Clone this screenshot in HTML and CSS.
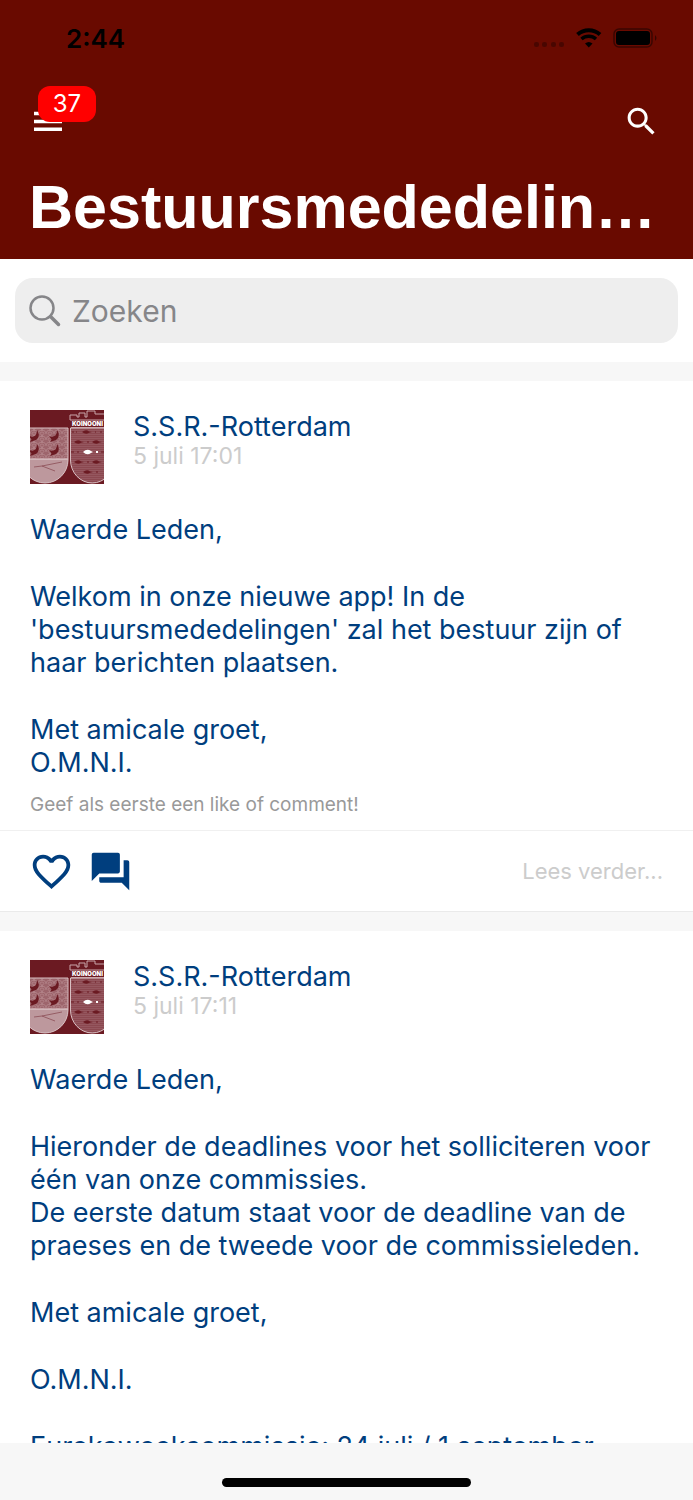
FILE: index.html
```html
<!DOCTYPE html>
<html lang="nl">
<head>
  <title>Bestuursmededelingen</title>
  <meta charset="utf-8">
  <meta name="viewport" content="width=device-width, initial-scale=1">
  <link rel="stylesheet" href="styles.css">
</head>
<body>
  <svg class="sprite" aria-hidden="true">
    <defs>
      <pattern id="waves" width="8" height="6" patternUnits="userSpaceOnUse">
        <path d="M0 6a4 4 0 0 1 8 0M2 6a2 2 0 0 1 4 0M-4 3a4 4 0 0 1 8 0M4 3a4 4 0 0 1 8 0" fill="none" stroke="#b98d92" stroke-width=".6"/>
      </pattern>
      <pattern id="stripes" width="4" height="2" patternUnits="userSpaceOnUse">
        <path d="M0 .5h4" stroke="#9c626a" stroke-width=".6"/>
      </pattern>
      <path id="bird" d="M8 0q3 4 1 8-2 3-5 3l-3 1 1.500-2.500L0 6q4 1.500 6.500-.5Q8 3.500 8 0z"/>
      <path id="fish" d="M0 0q4-3 7-.5l3 .5-3 .7Q4 3 0 0z"/>
    </defs>
    <symbol id="crest" viewBox="0 0 74 74">
      <rect width="74" height="74" fill="#6b1a22"/>
      <path d="M-8 18H38V50A23 23 0 0 1-8 50z" fill="#9d656c"/>
      <path d="M-8 18H38V49H-8z" fill="url(#waves)"/>
      <path d="M-8 49H38V50A23 23 0 0 1-8 50z" fill="#bd989d"/>
      <path d="M12 56l20-4M12 56l13 5M4 57l8-1" fill="none" stroke="#85444c" stroke-width=".7"/>
      <path d="M-8 49H38" stroke="#e5d3d5"/>
      <path d="M-8 18H38V50A23 23 0 0 1-8 50z" fill="none" stroke="#d8bfc2"/>
      <g fill="#6b1a22">
        <use href="#bird" x="-1" y="20"/>
        <use href="#bird" x="19" y="20"/>
        <use href="#bird" x="-1" y="34"/>
        <use href="#bird" x="19" y="34"/>
      </g>
      <path d="M40.500 18H84V50A21.750 23 0 0 1 40.500 50z" fill="#8b4850"/>
      <path d="M40.500 18H84V50A21.750 23 0 0 1 40.500 50z" fill="url(#stripes)" stroke="#d8bfc2"/>
      <g fill="#6b1a22">
        <use href="#fish" x="52" y="22"/>
        <use href="#fish" x="44" y="32"/>
        <use href="#fish" x="62" y="32"/>
        <use href="#fish" x="44" y="52"/>
        <use href="#fish" x="62" y="52"/>
        <use href="#fish" x="53" y="62"/>
      </g>
      <path d="M42 22h2M46 22h1M65 22h1M70 22h2M57 32h2M57 52h2M41 42h3M47 42h2M71 42h3M66 62h2" stroke="#6b1a22"/>
      <path d="M53 42q4-4 8-1l2 1-2 1q-4 3-8-1zM66 41h2v2h-2z" fill="#fff"/>
      <path d="M40 10V5H47V7H49V3H55V7H57V1H65V4H74M40 10H74M41 17.500H74" fill="none" stroke="#c9a5a9"/>
      <text x="42" y="16" class="crest-text">KOINOONI</text>
    </symbol>
    <symbol id="heart" viewBox="0 0 24 24">
      <path d="M16.500 3c-1.740 0-3.410.81-4.500 2.090C10.910 3.810 9.240 3 7.500 3 4.420 3 2 5.420 2 8.500c0 3.780 3.400 6.860 8.550 11.540L12 21.350l1.450-1.320C18.600 15.360 22 12.280 22 8.500 22 5.420 19.580 3 16.500 3zm-4.400 15.550l-.1.100-.1-.1C7.140 14.240 4 11.390 4 8.500 4 6.500 5.500 5 7.500 5c1.540 0 3.040.99 3.570 2.360h1.870C13.460 5.990 14.960 5 16.500 5c2 0 3.500 1.500 3.500 3.500 0 2.890-3.140 5.740-7.900 10.050z"/>
    </symbol>
    <symbol id="forum" viewBox="0 0 24 24">
      <path d="M21 6h-2v9H6v2c0 .55.45 1 1 1h11l4 4V7c0-.55-.45-1-1-1zm-4 6V3c0-.55-.45-1-1-1H3c-.55 0-1 .45-1 1v14l4-4h10c.55 0 1-.45 1-1z"/>
    </symbol>
  </svg>

  <header class="header">
    <div class="status">
      <span class="time">2:44</span>
      <svg class="status-icons" viewBox="0 0 124 24" aria-hidden="true">
        <g fill="#000" fill-opacity=".3">
          <rect x="1" y="16" width="5" height="5" rx="2"/>
          <rect x="9" y="16" width="5" height="5" rx="2"/>
          <rect x="18" y="16" width="5" height="5" rx="2"/>
          <rect x="26" y="16" width="5" height="5" rx="2"/>
        </g>
        <path d="M44.500 8.500a17 17 0 0 1 22.500 0" fill="none" stroke="#000" stroke-width="4"/>
        <path d="M48.500 13a11 11 0 0 1 14.500 0" fill="none" stroke="#000" stroke-width="3.500"/>
        <path d="M52 17.500a6 6 0 0 1 7.500 0L55.750 21.500z"/>
        <rect x="81" y="3" width="38" height="18" rx="5" fill="none" stroke="#000" stroke-opacity=".45" stroke-width="1.500"/>
        <rect x="83" y="5" width="34" height="14" rx="3"/>
        <path d="M122 9q3 3 0 6z" fill-opacity=".5"/>
      </svg>
    </div>
    <nav class="toolbar">
      <button class="icon-button menu" type="button" aria-label="Menu">
        <svg width="28" height="20" viewBox="0 0 28 20"><path d="M0 2.500h28M0 10.500h28M0 18.200h28" stroke="#fff" stroke-width="3.500"/></svg>
        <span class="badge">37</span>
      </button>
      <button class="icon-button" type="button" aria-label="Zoeken">
        <svg width="37" height="37" viewBox="0 0 24 24" fill="#fff"><path d="M15.500 14h-.79l-.28-.27C15.410 12.590 16 11.110 16 9.500 16 5.910 13.090 3 9.500 3S3 5.910 3 9.500 5.910 16 9.500 16c1.610 0 3.090-.59 4.230-1.570l.27.28v.79l5 4.990L20.490 19l-4.990-5zm-6 0C7.010 14 5 11.990 5 9.500S7.010 5 9.500 5 14 7.010 14 9.500 11.990 14 9.500 14z"/></svg>
      </button>
    </nav>
    <h1 class="title">Bestuursmededelingen</h1>
  </header>

  <div class="search-bar">
    <label class="search">
      <svg width="32" height="32" viewBox="0 0 32 32" fill="none" stroke="#868689" aria-hidden="true"><circle cx="13" cy="13" r="11.500" stroke-width="2.500"/><path d="M21.500 21.500l8 8" stroke-width="3.500" stroke-linecap="round"/></svg>
      <input class="search-input" type="search" placeholder="Zoeken" aria-label="Zoeken">
    </label>
  </div>

  <main class="feed">
    <article class="post">
      <div class="post-header">
        <svg class="avatar" role="img" aria-label="S.S.R.-Rotterdam"><use href="#crest"/></svg>
        <div>
          <h2 class="author">S.S.R.-Rotterdam</h2>
          <time class="date">5 juli 17:01</time>
        </div>
      </div>
      <div class="post-body">
        <p>Waerde Leden,</p>
        <p>Welkom in onze nieuwe app! In de 'bestuursmededelingen' zal het bestuur zijn of haar berichten plaatsen.</p>
        <p>Met amicale groet,<br>O.M.N.I.</p>
      </div>
      <p class="hint">Geef als eerste een like of comment!</p>
      <footer class="actions">
        <button class="icon-button" type="button" aria-label="Like"><svg class="action-icon"><use href="#heart"/></svg></button>
        <button class="icon-button" type="button" aria-label="Comment"><svg class="action-icon"><use href="#forum"/></svg></button>
        <a class="more" href="#">Lees verder...</a>
      </footer>
    </article>

    <article class="post">
      <div class="post-header">
        <svg class="avatar" role="img" aria-label="S.S.R.-Rotterdam"><use href="#crest"/></svg>
        <div>
          <h2 class="author">S.S.R.-Rotterdam</h2>
          <time class="date">5 juli 17:11</time>
        </div>
      </div>
      <div class="post-body">
        <p>Waerde Leden,</p>
        <p>Hieronder de deadlines voor het solliciteren voor één van onze commissies.<br>De eerste datum staat voor de deadline van de praeses en de tweede voor de commissieleden.</p>
        <p>Met amicale groet,</p>
        <p>O.M.N.I.</p>
        <p>Eurekaweekcommissie: 24 juli / 1 september</p>
      </div>
    </article>
  </main>

  <div class="home-bar"><div class="home-indicator"></div></div>
</body>
</html>
```

FILE: styles.css
```css
*, *::before, *::after {
  margin: 0;
  padding: 0;
  box-sizing: border-box;
}

body {
  height: 100vh;
  display: flex;
  flex-direction: column;
  overflow: hidden;
  color: #003e7e;
  font-family: Inter, "Liberation Sans", sans-serif;
  background-color: #f7f7f7;
}

.sprite {
  position: absolute;
  width: 0;
  height: 0;
}

.crest-text {
  fill: #fff;
  font-size: 6px;
  font-weight: 900;
}

.header {
  flex: none;
  padding: 22px 33px 14px 34px;
  color: #fff;
  background-color: #690a00;
}

.status {
  display: flex;
  align-items: center;
  justify-content: space-between;
  height: 32px;
  padding: 0 3px 0 32px;
}

.time {
  color: #000;
  font-size: 26px;
  font-weight: 600;
}

.status-icons {
  width: 124px;
  height: 24px;
}

.toolbar {
  display: flex;
  align-items: center;
  justify-content: space-between;
  margin-top: 48px;
  height: 38px;
}

.icon-button {
  display: flex;
  border: 0;
  color: inherit;
  font: inherit;
  background: none;
  cursor: pointer;
}

.menu {
  position: relative;
}

.badge {
  position: absolute;
  left: 4px;
  bottom: 9px;
  width: 58px;
  border-radius: 12px;
  font-size: 24px;
  line-height: 36px;
  text-align: center;
  background-color: #f00;
}

.title {
  margin: 29px 0 0 -5px;
  overflow: hidden;
  font-family: "Liberation Sans", Arial, sans-serif;
  font-size: 61px;
  font-weight: 700;
  line-height: 76px;
  text-overflow: ellipsis;
  white-space: nowrap;
}

.search-bar {
  flex: none;
  padding: 19px 15px;
  background-color: #fff;
}

.search {
  display: flex;
  align-items: center;
  gap: 11px;
  height: 65px;
  padding: 0 14px;
  border-radius: 18px;
  background-color: #eee;
}

.search-input {
  flex: 1;
  min-width: 0;
  border: 0;
  outline: 0;
  color: #333;
  font: inherit;
  font-size: 30px;
  background: none;
}

.search-input::placeholder {
  color: #868689;
}

.feed {
  flex: 1;
  min-height: 0;
  overflow: hidden;
}

.post {
  margin-top: 19px;
  background-color: #fff;
}

.post-header {
  display: flex;
  gap: 29px;
  padding: 29px 30px 0;
}

.avatar {
  width: 74px;
  height: 74px;
}

.author {
  font-size: 27px;
  font-weight: 400;
  line-height: 33px;
}

.date {
  display: block;
  color: #ccc;
  font-size: 23px;
  line-height: 26px;
}

.post-body {
  display: grid;
  gap: 34px;
  padding: 29px 30px 0;
  font-size: 27px;
  line-height: 33px;
}

.hint {
  padding: 13px 30px 12px;
  color: #999;
  font-size: 19px;
  line-height: 26px;
}

.actions {
  display: flex;
  align-items: center;
  gap: 14px;
  height: 82px;
  padding: 0 30px 0 29px;
  border-top: 1px solid #f0f0f0;
  border-bottom: 1px solid #eaeaea;
}

.action-icon {
  width: 45px;
  height: 45px;
  fill: currentColor;
}

.more {
  margin-left: auto;
  color: #ccc;
  font-size: 22px;
  text-decoration: none;
}

.home-bar {
  flex: none;
  display: flex;
  justify-content: center;
  height: 57px;
  padding-top: 35px;
  background-color: #f7f7f7;
}

.home-indicator {
  width: 36%;
  height: 9px;
  border-radius: 5px;
  background-color: #000;
}
```
